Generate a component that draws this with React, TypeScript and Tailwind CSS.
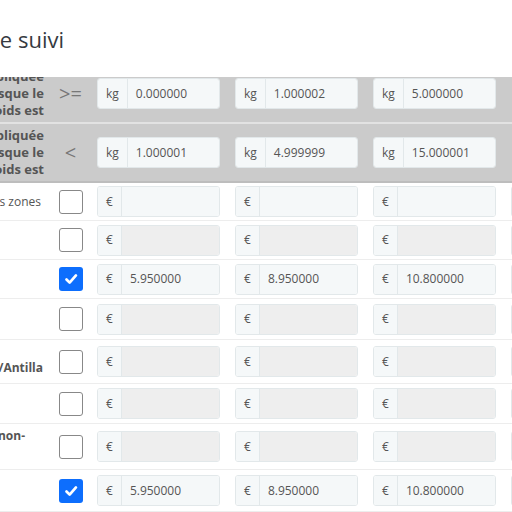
import React from 'react';

type Row = {
  label: string;
  labelClass?: string;
  bold?: boolean;
  h: string;
  checked?: boolean;
  values?: string[];
  disabled?: boolean;
};

const bodyRows: Row[] = [
  { label: 'Toutes les zones', labelClass: 'pr-[3px]', h: 'h-[38px]' },
  { label: '', h: 'h-[39px]', disabled: true },
  { label: '', h: 'h-[39px]', checked: true, values: ['5.950000', '8.950000', '10.800000'] },
  { label: '', h: 'h-[41px]', disabled: true },
  { label: 'Guadeloupe/Martinique/Antilla', bold: true, labelClass: 'pr-[1px] pt-[12px]', h: 'h-[44px]', disabled: true },
  { label: '', h: 'h-[40px]', disabled: true },
  { label: 'Outre-Mer et pays non-', bold: true, labelClass: 'pr-[19px] pb-[23px]', h: 'h-[46px]', disabled: true },
  { label: '', h: 'h-[42px]', checked: true, values: ['5.950000', '8.950000', '10.800000'] },
];

function InputGroup({ unit, value, disabled }: { unit: string; value?: string; disabled?: boolean }) {
  return (
    <div className="flex h-[31px] w-[123px] overflow-hidden rounded-[3px] border border-[#e2e8ea]">
      <span className="flex shrink-0 items-center border-r border-[#e2e8ea] bg-[#f5f8f9] px-[8px] text-[#555]">
        {unit}
      </span>
      <span className={`flex flex-1 items-center pl-[8px] text-[#555] ${disabled ? 'bg-[#eeeeee]' : 'bg-[#f5f8f9]'}`}>
        {value}
      </span>
    </div>
  );
}

function Checkbox({ checked }: { checked?: boolean }) {
  if (checked) {
    return (
      <div className="flex h-[24px] w-[24px] items-center justify-center rounded-[3px] bg-[#0d6efd]">
        <svg width="18" height="18" viewBox="0 0 20 20" fill="none">
          <path d="M5 10.5l3.5 3.5 7-8" stroke="#fff" strokeWidth="3" strokeLinecap="round" strokeLinejoin="round" />
        </svg>
      </div>
    );
  }
  return <div className="h-[24px] w-[24px] rounded-[3px] border-[1.5px] border-[#888] bg-white" />;
}

function HeaderLabel() {
  return (
    <div className="flex w-[44px] shrink-0 flex-col items-end text-[13px] font-bold leading-[17px] text-[#555]">
      <div className="whitespace-nowrap">Sera appliquée</div>
      <div className="whitespace-nowrap">lorsque le</div>
      <div className="whitespace-nowrap">poids est</div>
    </div>
  );
}

export default function App() {
  return (
    <div className="h-[512px] w-[512px] overflow-hidden bg-white font-['Open_Sans','Noto_Sans',sans-serif] text-[12px] text-[#555]">
      <div className="h-[77px] pt-[24px]">
        <div className="flex w-[64px] justify-end">
          <h1 className="whitespace-nowrap text-[22px] leading-[30px] text-[#363a41]">Numéro de suivi</h1>
        </div>
      </div>

      {/* range header rows */}
      <div className="h-[47px] overflow-hidden border-b-2 border-[#e2e2e2] bg-[#cbcbcb]">
        <div className="-mt-[12px] flex h-[57px] items-center">
          <HeaderLabel />
          <div className="flex w-[53px] shrink-0 justify-center text-[20px] text-[#777]">&gt;=</div>
          {['0.000000', '1.000002', '5.000000'].map((v) => (
            <div key={v} className="w-[138px] shrink-0">
              <InputGroup unit="kg" value={v} />
            </div>
          ))}
        </div>
      </div>
      <div className="flex h-[59px] items-center border-b-2 border-[#bdbdbd] bg-[#cbcbcb]">
        <HeaderLabel />
        <div className="flex w-[53px] shrink-0 justify-center text-[20px] text-[#777]">&lt;</div>
        {['1.000001', '4.999999', '15.000001'].map((v) => (
          <div key={v} className="w-[138px] shrink-0">
            <InputGroup unit="kg" value={v} />
          </div>
        ))}
      </div>

      {/* zone rows */}
      {bodyRows.map((r, i) => (
        <div key={i} className={`flex items-center border-b border-[#ededed] ${r.h}`}>
          <div className={`flex w-[44px] shrink-0 flex-col items-end leading-[17px] ${r.bold ? 'font-bold' : ''} ${r.labelClass ?? ''}`}>
            <div className="whitespace-nowrap">{r.label}</div>
          </div>
          <div className="flex w-[53px] shrink-0 justify-center">
            <Checkbox checked={r.checked} />
          </div>
          {[0, 1, 2, 3].map((c) => (
            <div key={c} className="w-[138px] shrink-0">
              <InputGroup unit="€" value={r.values?.[c]} disabled={r.disabled} />
            </div>
          ))}
        </div>
      ))}
    </div>
  );
}
